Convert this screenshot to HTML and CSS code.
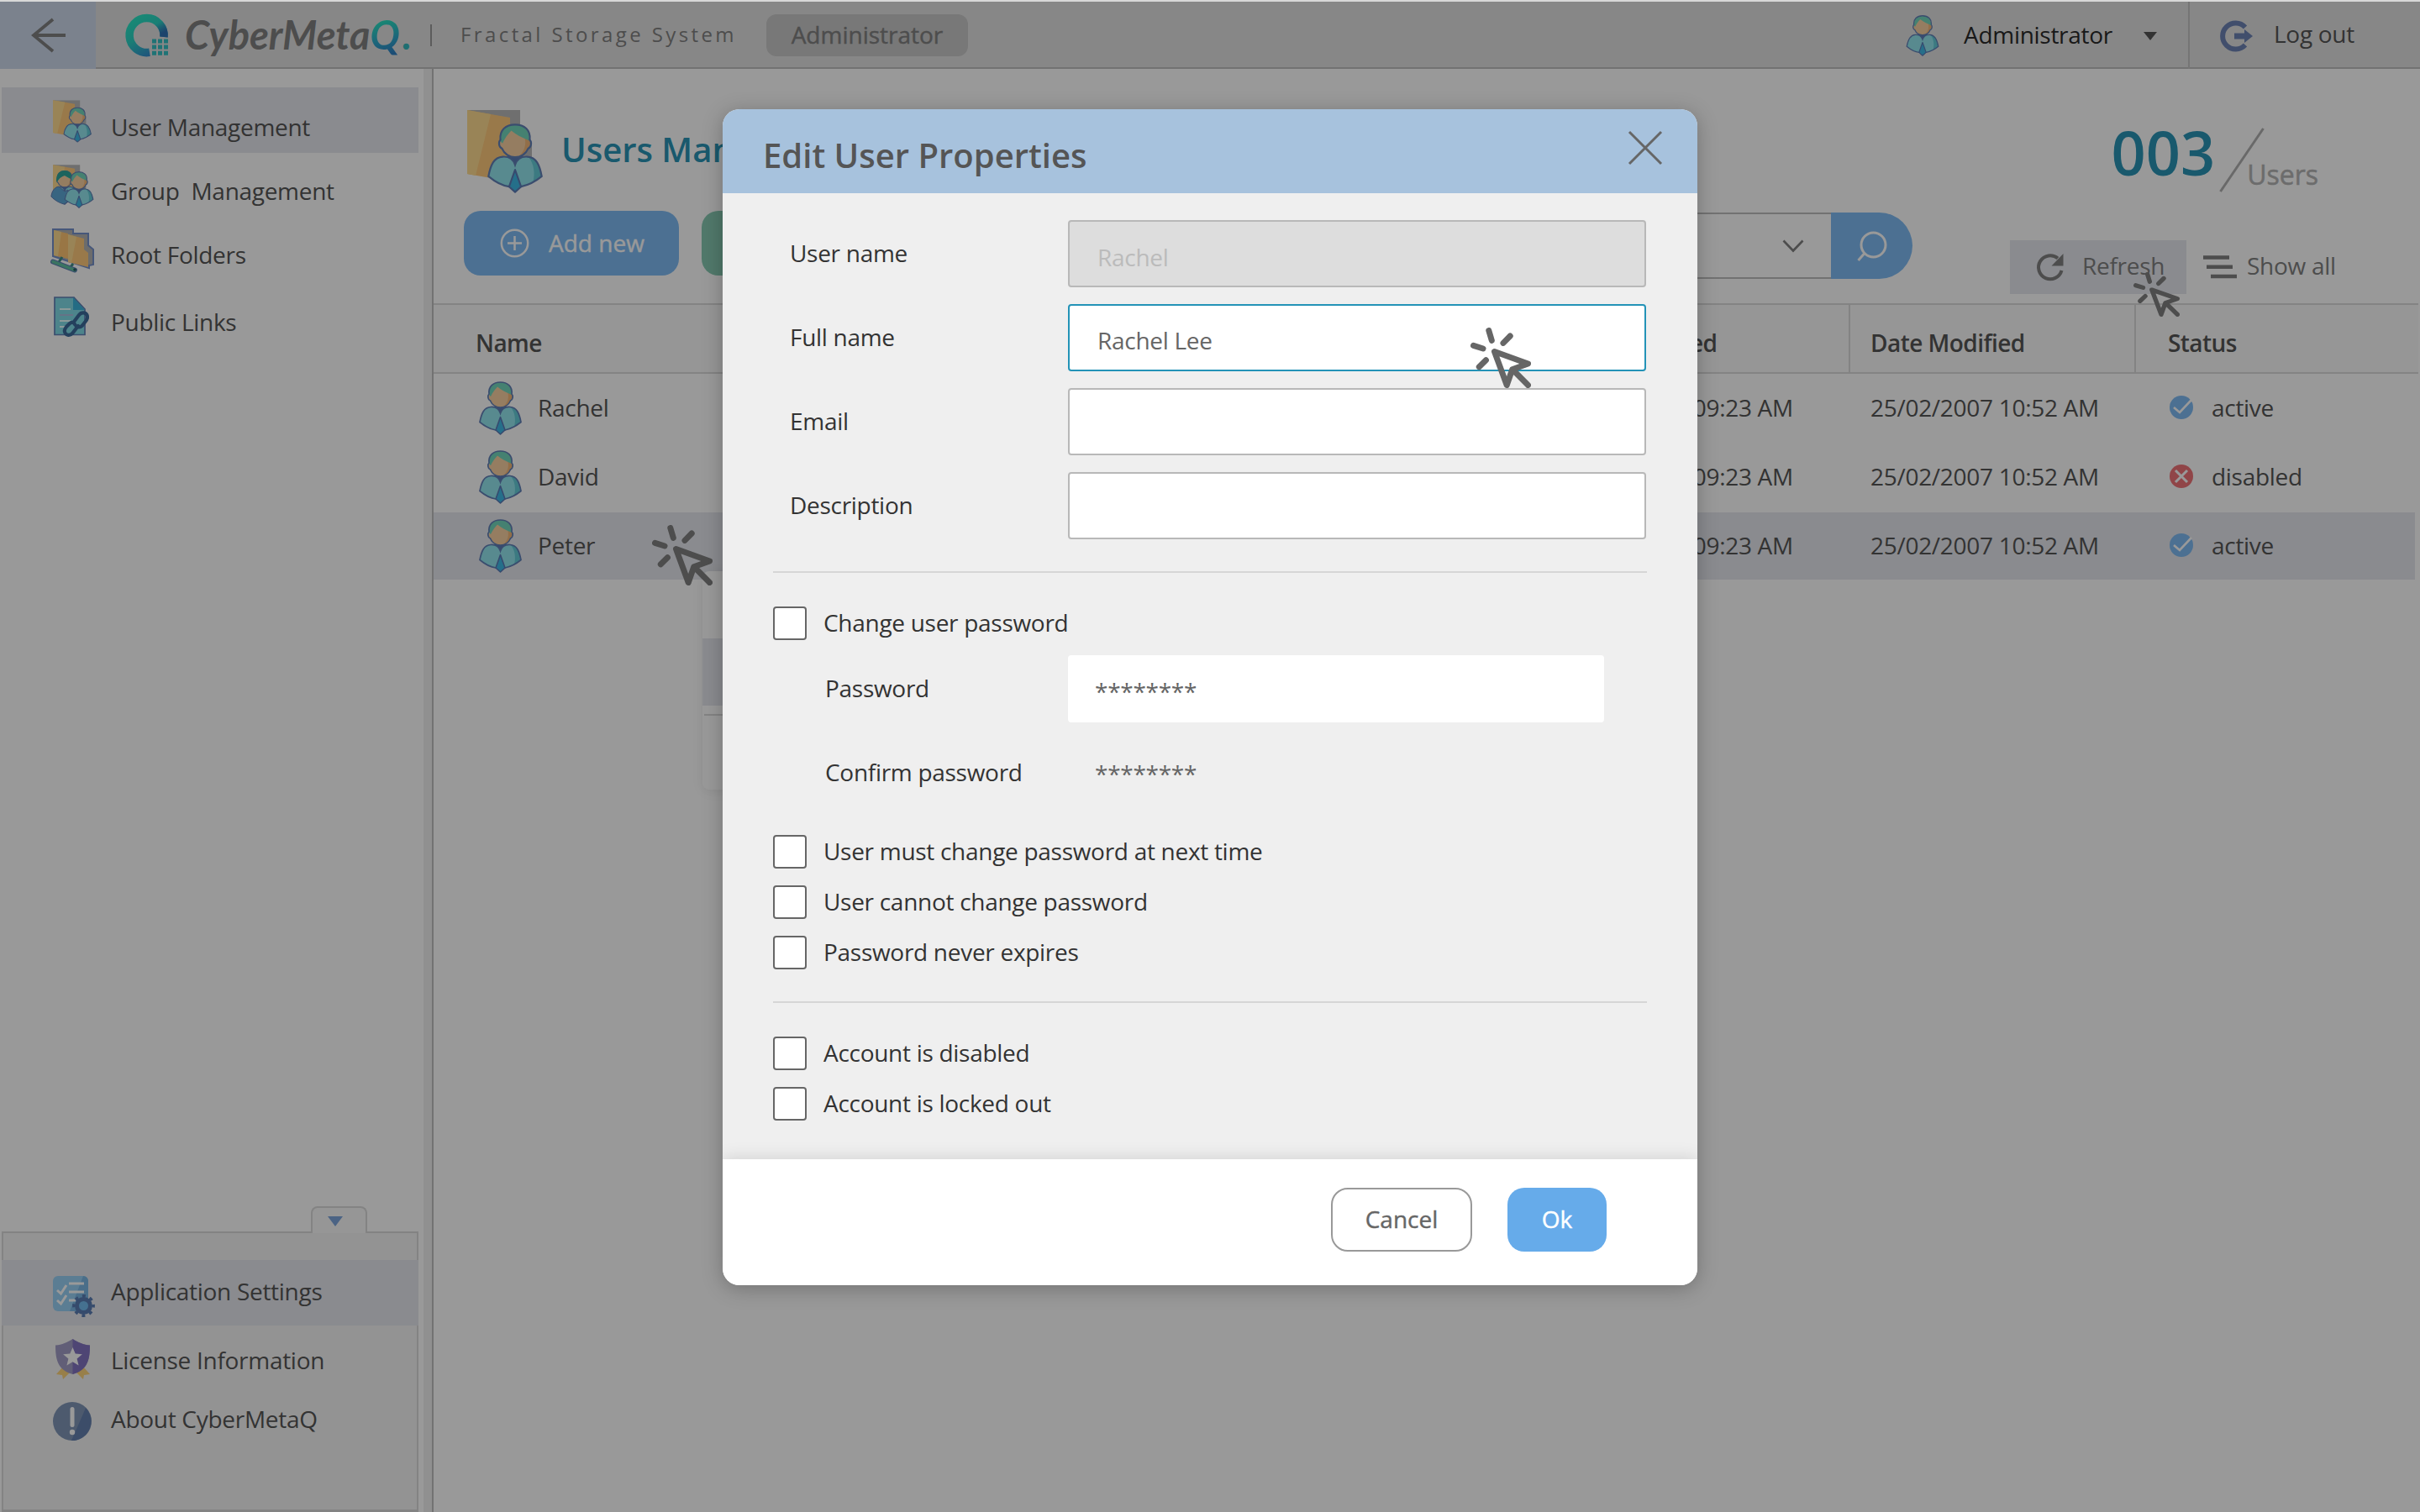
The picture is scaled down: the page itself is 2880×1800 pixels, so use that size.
FILE: index.html
```html
<!DOCTYPE html>
<html lang="en">
<head>
<meta charset="utf-8">
<title>CyberMetaQ – Users Management</title>
<link rel="stylesheet" href="styles.css">
</head>
<body>
<svg class="sprite" aria-hidden="true">
  <defs>
    <linearGradient id="ring" x1="0.2" y1="0" x2="0.8" y2="1">
      <stop offset="0" stop-color="#2ae3c4"/><stop offset="0.45" stop-color="#2dd0c4"/><stop offset="1" stop-color="#3588d0"/>
    </linearGradient>
    <linearGradient id="ringtip" x1="0" y1="0" x2="0.4" y2="1">
      <stop offset="0.4" stop-color="#3070b4" stop-opacity="0"/><stop offset="1" stop-color="#3070b4"/>
    </linearGradient>
    <symbol id="user" viewBox="0 0 51 64">
      <path d="M18 30h15l-7.500 9z" fill="#5c7cb8"/>
      <path d="M1 48.500C3 38 6 31 14 30.500c6-.5 10 3 11.500 7.500 1.500-4.500 5.500-8 11.500-7.500 8 .5 11 7.500 13 18-6 5-12 8-19 9.500H20C13 57 7 53.500 1 48.500z" fill="#93e6ee"/>
      <path d="M38 31c9 1 10 9 12 17.500l-8 5.500c2-8 1-17-4-23z" fill="#64ccd8"/>
      <path d="M1 48.500C3 38 6 31 14 30.500c6-.5 10 3 11.500 7.500 1.500-4.500 5.500-8 11.500-7.500 8 .5 11 7.500 13 18-6 5-12 8-19 9.500H20C13 57 7 53.500 1 48.500z" fill="none" stroke="#6280b8" stroke-width="1.700"/>
      <path d="M25.500 42.500L31 58l-5.500 5L20 58z" fill="#3eb9e6" stroke="#5c7cb8" stroke-width="1.600" stroke-linejoin="round"/>
      <path d="M12 15C11 6 17 1 25.500 1S40 6 39 15c2 2 1.500 7-1.500 8-2 5-7 8-12 8s-10-3-12-8c-3-1-3.500-6-1.500-8z" fill="#f8d0a2"/>
      <path d="M34 12l5 3c2 2 1.500 7-1.500 8-2 4-5 7-8.500 7.500 6-6 7-12 5-18.500z" fill="#f4b878"/>
      <path d="M14 18c-2-1-2-3-2-5C12 5 18 1 25.500 1S39 5 39 16c-7-3-13-6-17-9.500-3 3-6 7-8 11.500z" fill="#74d8bc"/>
      <path d="M12 15C11 6 17 1 25.500 1S40 6 39 15c2 2 1.500 7-1.500 8-2 5-7 8-12 8s-10-3-12-8c-3-1-3.500-6-1.500-8z" fill="none" stroke="#6280b8" stroke-width="1.700"/>
    </symbol>
    <symbol id="folder" viewBox="0 0 90 99">
      <path d="M1 0h62v41h14v36H25z" fill="#b9b9b9"/>
      <path d="M0 0l51 9v76L0 76z" fill="#ffca7c"/>
      <path d="M0 0l28 5-18 73-10-2z" fill="#ffdd92"/>
    </symbol>
    <symbol id="click" viewBox="0 0 72 72">
      <g fill="none" stroke="currentColor" stroke-width="7" stroke-linecap="round" stroke-linejoin="round">
        <path d="M21.800 3.500l3.500 11.800M3.500 21.300l11.500 3.700M10.300 46.700l8.100-8M47.200 10l-8.200 8.400"/>
        <path d="M28.500 28.500L68.500 43l-18.800 6.800L43.200 68.500z M51.700 51.500l16.800 17"/>
      </g>
    </symbol>
    <symbol id="ok" viewBox="0 0 28 28">
      <circle cx="14" cy="14" r="14" fill="#7fbbf3"/><path d="M5 14l7 6L26 5" fill="none" stroke="#fff" stroke-width="2.600"/>
    </symbol>
    <symbol id="no" viewBox="0 0 28 28">
      <circle cx="14" cy="14" r="14" fill="#f07478"/><path d="M7 7l14 14M21 7L7 21" fill="none" stroke="#fff" stroke-width="3"/>
    </symbol>
  </defs>
</svg>

<div class="app">
  <header class="topbar">
    <button class="back"><svg width="42" height="42" viewBox="0 0 42 42"><path d="M41 21H3M26 2L3 21l23 19" fill="none" stroke="#808080" stroke-width="3.800"/></svg></button>
    <div class="brand">
      <svg width="50" height="50" viewBox="0 0 50 50">
        <path d="M45 27A20.500 20.500 0 1 0 28 45.300" fill="none" stroke="url(#ring)" stroke-width="9.500"/>
        <path d="M29 5A20.500 20.500 0 0 1 45 27" fill="none" stroke="url(#ringtip)" stroke-width="9.500"/>
        <path d="M31 29.500h5v5h-5zM38 29.500h5v5h-5zM45 29.500h5v5h-5zM31 36.500h5v5h-5zM38 36.500h5v5h-5zM45 36.500h5v5h-5zM31 43.700h5v5h-5zM38 43.700h5v5h-5zM45 43.700h5v5h-5z" fill="#35c0c4"/>
      </svg>
      <span class="wordmark">CyberMeta<span class="q">Q</span><span class="dot">.</span></span>
    </div>
    <span class="rule"></span>
    <span class="product">Fractal Storage System</span>
    <span class="role">Administrator</span>
    <div class="account">
      <svg width="40" height="49"><use href="#user"/></svg>
      <span class="who">Administrator</span>
      <span class="caret"></span>
    </div>
    <div class="logout">
      <svg width="42" height="38" viewBox="0 0 42 38"><path d="M33 8.500A15.500 15.500 0 1 0 33 29.500" fill="none" stroke="#6d83b5" stroke-width="6"/><path d="M20 15.500h12V11l10 8-10 8v-4.500H20z" fill="#6d83b5"/></svg>
      <span>Log out</span>
    </div>
  </header>

  <div class="body">
    <aside class="sidebar">
      <nav class="menu">
        <a class="item active">
          <svg width="46" height="51" viewBox="0 0 90 99"><use href="#folder" width="90" height="99"/><use href="#user" x="24" y="16" width="66" height="83"/></svg>
          <span>User Management</span></a>
        <a class="item">
          <svg width="52" height="52" viewBox="0 0 52 52"><use href="#folder" x="3" width="46" height="51"/>
            <g><use href="#user" x="0" y="7" width="34" height="41"/><path d="M1 37c1-6 4-10 9-11l7 6 4-2v14l-5 3C9 45 5 42 1 38z" fill="#5ea9d8" stroke="#6280b8"/><path d="M7 19c0-8 4-12 10-12s9 4 9 11l-9-5c-3 1-7 3-9 8z" fill="#2fa79c"/></g>
            <use href="#user" x="16" y="8" width="36" height="44"/></svg>
          <span>Group&nbsp; Management</span></a>
        <a class="item">
          <svg width="52" height="52" viewBox="0 0 52 52"><path d="M3 1h24v5h18v14l6 5v18l-5 1v3L3 33z" fill="#b4b4b4" stroke="#7692cc" stroke-width="2"/>
            <path d="M4 2l17 4v30L4 32z" fill="#ffc573"/><path d="M4 2l9 2-4 29-5-1z" fill="#ffdd92"/>
            <path d="M21 7l19 5v13l5 4v17l-24-6z" fill="#ffca7c"/><path d="M21 7l10 3-6 31-4-1z" fill="#ffdd92"/>
            <path d="M14 34l-4 6M27 42l-4 5" stroke="#3f8f88" stroke-width="3"/><path d="M3 39.500l26 10" stroke="#6280b8" stroke-width="6" stroke-linecap="round"/><path d="M3 39.500l26 10" stroke="#62c2a2" stroke-width="3.600" stroke-linecap="round"/><circle cx="29" cy="49" r="1.800" fill="#285c68"/></svg>
          <span>Root Folders</span></a>
        <a class="item">
          <svg width="44" height="50" viewBox="0 0 44 50"><path d="M1 1h23l13 14v30.500H1z" fill="#80dce8" stroke="#6280b8" stroke-width="1.700"/><path d="M23 1v15h14z" fill="#3cb4dc"/>
            <path d="M7 15h13M7 29h13M7 36h8" stroke="#e8ffff" stroke-width="2"/><path d="M7 22h16" stroke="#a8c0e0" stroke-width="2"/>
            <g fill="none" stroke="#3c6c9c" stroke-width="4.200" stroke-linecap="round"><path d="M24 30l6-8c3-4 8-3 9.500 0s.5 5-2 8l-4 5c-2 2-5 2-7 0"/><path d="M29 35l-7 9c-3 3-7 2-8.500-.5s-.5-5 1.500-7.500l4-4c2-2 5-1 6 1"/></g></svg>
          <span>Public Links</span></a>
      </nav>
      <div class="drawer">
        <span class="tab"><i></i></span>
        <a class="item active">
          <svg width="50" height="50" viewBox="0 0 50 50"><rect width="42" height="42" rx="6" fill="#98d0f6"/><path d="M36 0a6 6 0 0 1 6 6v30a6 6 0 0 1-6 6H20z" fill="#7cb8e4"/>
            <path d="M5 17l4.500 4L16 11M5 29l4.500 4L16 23M19 9h18M19 19h18M19 29h8" fill="none" stroke="#fff" stroke-width="3"/>
            <circle cx="36.500" cy="35.500" r="8" fill="#74bdf0" stroke="#5a7db5" stroke-width="5"/><circle cx="36.500" cy="35.500" r="11.700" fill="none" stroke="#5a7db5" stroke-width="3.400" stroke-dasharray="4 5.190" stroke-dashoffset="2"/></svg>
          <span>Application Settings</span></a>
        <a class="item">
          <svg width="42" height="50" viewBox="0 0 42 50"><path d="M9 33L1 42l7 1 1 5 8-8zM33 33l8 9-7 1-1 5-8-8z" fill="#fed47a"/>
            <path d="M20.500 0c6 4 13 7 20.500 7.500C41 27 37 37 20.500 42 4 37 0 27 0 7.500 8 7 14 4 20.500 0z" fill="#a29dc6"/><path d="M20.500 0c6 4 13 7 20.500 7.500C41 27 37 37 20.500 42z" fill="#8374c2"/>
            <path d="M20.500 10l3.200 7.600 8.200.6-6.300 5.300 2 8-7.100-4.300-7.100 4.300 2-8-6.300-5.300 8.200-.6z" fill="#fff"/></svg>
          <span>License Information</span></a>
        <a class="item">
          <svg width="46" height="46" viewBox="0 0 46 46"><circle cx="23" cy="23" r="23" fill="#8096b8"/><path d="M39 7a23 23 0 0 1-17 39c6-14 12-27 17-39z" fill="#6480b0"/><path d="M23 8.500v19" stroke="#fff" stroke-width="5" stroke-linecap="round"/><circle cx="23" cy="36" r="3.200" fill="#fff"/></svg>
          <span>About CyberMetaQ</span></a>
      </div>
    </aside>
    <div class="gutter"></div>

    <main class="main">
      <section class="heading">
        <svg class="heading-icon" width="90" height="99" viewBox="0 0 90 99"><use href="#folder"/><use href="#user" x="24" y="16" width="66" height="83"/></svg>
        <h1>Users Management</h1>
        <div class="count">
          <strong>003</strong>
          <svg width="54" height="77" viewBox="0 0 54 77"><path d="M1.500 76L52.500 1" stroke="#b0b0b0" stroke-width="3"/></svg>
          <span>Users</span>
        </div>
      </section>
      <section class="toolbar">
        <button class="btn add"><svg width="35" height="35" viewBox="0 0 35 35"><path d="M17.500 9v17M9 17.500h17" stroke="#fff" stroke-width="2.500"/><circle cx="17.500" cy="17.500" r="15.700" fill="none" stroke="#fff" stroke-width="2.500"/></svg><span>Add new</span></button>
        <button class="btn green"></button>
        <div class="search">
          <div class="query"><svg width="26" height="16" viewBox="0 0 26 16"><path d="M1.500 1.500L13 13.500 24.500 1.500" fill="none" stroke="#808080" stroke-width="2.600"/></svg></div>
          <button class="go"><svg width="36" height="38" viewBox="0 0 36 38"><circle cx="19.500" cy="17.500" r="14.500" fill="none" stroke="#fff" stroke-width="3"/><path d="M8.500 28L1.500 36" stroke="#fff" stroke-width="3"/></svg></button>
        </div>
        <div class="tool refresh">
          <svg width="34" height="34" viewBox="0 0 34 34"><path d="M30.500 21A14 14 0 1 1 26 6.500" fill="none" stroke="#808080" stroke-width="4"/><path d="M32.500 1v14.500H18.500z" fill="#808080"/></svg>
          <span>Refresh</span>
          <svg class="pointer" width="55" height="53" viewBox="0 0 72 72" preserveAspectRatio="none"><use href="#click" width="72" height="72"/></svg>
        </div>
        <div class="tool">
          <svg width="40" height="28" viewBox="0 0 40 28"><path d="M0 2.500h31M4 13.800h31M9 25h31" stroke="#808080" stroke-width="4.500"/></svg>
          <span>Show all</span>
        </div>
      </section>
      <section class="table">
        <div class="row head"><span>Name</span><span>Date Created</span><span>Date Modified</span><span>Status</span></div>
        <div class="row"><span><svg width="51" height="64"><use href="#user"/></svg>Rachel</span><span>25/02/2007 09:23 AM</span><span>25/02/2007 10:52 AM</span><span><svg width="28" height="28"><use href="#ok"/></svg>active</span></div>
        <div class="row"><span><svg width="51" height="64"><use href="#user"/></svg>David</span><span>25/02/2007 09:23 AM</span><span>25/02/2007 10:52 AM</span><span><svg width="28" height="28"><use href="#no"/></svg>disabled</span></div>
        <div class="row selected"><span><svg width="51" height="64"><use href="#user"/></svg>Peter</span><span>25/02/2007 09:23 AM</span><span>25/02/2007 10:52 AM</span><span><svg width="28" height="28"><use href="#ok"/></svg>active</span>
          <div class="context"><i class="hot"></i><i class="line"></i></div>
          <svg class="pointer" width="72" height="72"><use href="#click"/></svg>
        </div>
      </section>
    </main>
  </div>

  <div class="overlay">
    <form class="modal">
      <header class="modal-head">
        <h2>Edit User Properties</h2>
        <svg width="42" height="42" viewBox="0 0 42 42"><path d="M2 2l38 38M40 2L2 40" stroke="#666" stroke-width="3"/></svg>
      </header>
      <div class="modal-body">
        <div class="field"><label>User name</label><div class="input disabled">Rachel</div></div>
        <div class="field"><label>Full name</label><div class="input focus">Rachel Lee<svg class="pointer" width="72" height="72"><use href="#click"/></svg></div></div>
        <div class="field"><label>Email</label><div class="input"></div></div>
        <div class="field"><label>Description</label><div class="input"></div></div>
        <hr>
        <div class="check first"><i></i><span>Change user password</span></div>
        <div class="secret"><label>Password</label><div class="pw filled">********</div></div>
        <div class="secret"><label>Confirm password</label><div class="pw">********</div></div>
        <div class="check policy"><i></i><span>User must change password at next time</span></div>
        <div class="check"><i></i><span>User cannot change password</span></div>
        <div class="check"><i></i><span>Password never expires</span></div>
        <hr class="second">
        <div class="check first"><i></i><span>Account is disabled</span></div>
        <div class="check"><i></i><span>Account is locked out</span></div>
      </div>
      <footer class="modal-foot">
        <button type="button" class="cancel">Cancel</button>
        <button type="button" class="okay">Ok</button>
      </footer>
    </form>
  </div>
</div>
</body>
</html>
```
FILE: styles.css
```css
* { box-sizing: border-box; }
body { margin: 0; background: #d8d8d8; font: 28px/40px "Open Sans", sans-serif; letter-spacing: -0.29px; color: #555; }
button { border: 0; padding: 0; font: inherit; letter-spacing: inherit; }
svg { display: block; flex: none; overflow: visible; }
.sprite { position: absolute; width: 0; height: 0; }
.app { position: relative; width: 2880px; height: 1800px; padding-top: 2px; display: flex; flex-direction: column; overflow: hidden; }

/* top bar */
.topbar { height: 80px; flex: none; display: flex; align-items: center; background: #e2e2e2; box-shadow: inset 0 -2px #bfbfbf; white-space: nowrap; }
.back { width: 114px; height: 80px; padding-left: 37px; background: #cdd9eb; }
.brand { margin-left: 36px; display: flex; align-items: center; gap: 20px; width: 362px; }
.wordmark { margin-top: -2px; font: italic 700 47px/60px Lato, sans-serif; letter-spacing: 0; color: #808080; }
.q { display: inline-block; padding-right: 3px; background: linear-gradient(165deg, #2ae0c0 25%, #30a8cc 60%, #3080c4 85%); -webkit-background-clip: text; background-clip: text; color: transparent; }
.dot { color: #35b8bc; }
.rule { width: 2px; height: 26px; background: #999; }
.product { margin: -2px 0 0 34px; width: 364px; font-size: 24px; letter-spacing: 3.4px; color: #808080; }
.role { width: 240px; height: 50px; line-height: 48px; border-radius: 12px; text-align: center; background: #c8c8c8; color: #808080; font-weight: 500; letter-spacing: 0; -webkit-text-stroke: 0.4px; }
.account { margin-left: auto; width: 338px; height: 80px; display: flex; align-items: center; border-right: 2px solid #c4c4c4; }
.who { margin: -2px 0 0 29px; width: 214px; color: #2b2b2b; }
.caret { margin-top: 2px; border: 8px solid transparent; border-top: 10px solid #555; border-bottom: 0; }
.logout { width: 274px; padding-left: 33px; display: flex; align-items: center; gap: 25px; }
.logout svg { margin-top: 1px; }
.logout span { margin-top: -5px; }

/* sidebar */
.body { flex: 1; display: flex; background: #fff; }
.sidebar { width: 504px; padding: 22px 6px 0 2px; display: flex; flex-direction: column; }
.item { display: flex; align-items: center; height: 76px; padding: 15px 0 0 61px; }
.item svg { margin-top: -12px; }
.item.active { background: #e6e8ee; }
.menu .item:nth-child(1) { height: 78px; }
.menu .item:nth-child(1) svg { margin: -13px 23px 0 0; }
.menu .item:nth-child(n+2) { padding-left: 58px; }
.menu .item:nth-child(n+2) svg { width: 52px; margin-right: 20px; }
.menu .item:nth-child(n+2) span { margin-top: -2px; }
.menu .item:nth-child(4) { padding-top: 19px; margin-top: 2px; }
.drawer { position: relative; margin-top: auto; height: 334px; border: 2px solid #dadada; border-bottom-width: 3px; background: #f5f5f5; padding-top: 32px; }
.drawer .item { height: 78px; padding: 0 0 0 61px; margin: 0 -2px; }
.drawer .item svg { margin: 9px 19px 0 0; }
.drawer .item span { margin-top: -4px; }
.drawer .item:nth-of-type(2) { margin-top: 2px; padding-left: 64px; }
.drawer .item:nth-of-type(2) svg { margin: 0 24px 0 0; }
.drawer .item:nth-of-type(2) span { margin-top: 0; }
.drawer .item:nth-of-type(3) { margin-top: -6px; }
.drawer .item:nth-of-type(3) svg { margin: 2px 23px 0 0; }
.drawer .item:nth-of-type(3) span { margin-top: -4px; }
.tab { position: absolute; left: 366px; top: -32px; width: 67px; height: 32px; border: 2px solid #dadada; border-bottom: 0; border-radius: 8px 8px 0 0; background: #fbfbfb; padding: 10px 0 0 18px; }
.tab i { display: block; width: 0; border: 9px solid transparent; border-top: 12px solid #7da5dc; border-bottom: 0; }
.gutter { width: 12px; background: #f1f1f1; border-right: 2px solid #bfbfbf; }

/* main area */
.main { flex: 1; display: flex; flex-direction: column; }
.heading { display: flex; height: 169px; padding: 49px 121px 0 40px; }
h1 { margin: 20px 0 0 22px; font-size: 40px; line-height: 54px; font-weight: 600; letter-spacing: 0; color: #2a94b6; }
.count { margin-left: auto; display: flex; height: 100px; }
.count strong { font-size: 72px; line-height: 100px; font-weight: 600; letter-spacing: 0; color: #2a94b6; }
.count svg { margin: 21px 0 0 5px; }
.count span { margin: 57px 0 0 -21px; font-size: 32px; line-height: 40px; font-weight: 500; letter-spacing: 0; -webkit-text-stroke: 0.5px; color: #b4b4b4; }
.toolbar { display: flex; height: 110px; padding-left: 36px; align-items: flex-start; }
.btn { height: 77px; border-radius: 20px; display: flex; align-items: center; color: #fff; }
.add { width: 256px; padding-left: 43px; gap: 23px; background: #7fbbf3; font-weight: 500; letter-spacing: 0; -webkit-text-stroke: 0.4px; }
.add span { margin-top: -2px; }
.green { margin-left: 27px; width: 256px; background: #87cab2; }
.search { margin: 2px 0 0 409px; width: 776px; height: 79px; display: flex; }
.query { flex: 1; border: 2px solid #bfbfbf; border-right: 0; display: flex; align-items: center; justify-content: flex-end; padding-right: 32px; }
.go { width: 97px; border-radius: 0 40px 40px 0; background: #7fbbf3; padding-left: 31px; }
.tool { margin: 35px 0 0 0; height: 64px; display: flex; align-items: center; color: #808080; padding-left: 20px; gap: 12px; }
.refresh { position: relative; z-index: 1; margin-left: 116px; width: 210px; background: #e6e8ee; padding-left: 31px; gap: 21px; }
.tool span { margin-top: -5px; }
.pointer { position: absolute; color: #808080; }
.refresh .pointer { left: 147px; top: 38px; }

/* table */
.row { position: relative; display: grid; grid-template-columns: 1320px 364px 340px 334px; height: 82px; }
.row > span { display: flex; align-items: center; padding: 0 0 2px 26px; }
.row > span:first-child { padding-left: 54px; }
.row svg { margin: 2px 19px 0 0; }
.row > span:nth-child(4) svg { margin: 0 22px 0 0; }
.row > span:nth-child(4) { padding-left: 42px; }
.head { width: 2362px; height: 84px; font-weight: 600; letter-spacing: -0.55px; background: #fbfbfb; border: solid #dadada; border-width: 2px 0; }
.head > span { padding: 9px 0 0 36px; }
.head > span:nth-child(n+3) { border-left: 2px solid #dadada; }
.head > span:nth-child(3) { padding-left: 24px; }
.head > span:first-child { padding-left: 50px; }
.head > span:nth-child(4) { padding-left: 38px; }
.selected { width: 2358px; height: 80px; margin-top: 1px; background: #e6e8ee; }
.row .pointer { left: 260px; top: 15px; margin: 0; }
.context { position: absolute; left: 320px; top: 70px; width: 400px; height: 260px; border-radius: 8px; background: #fff; box-shadow: 0 2px 14px rgba(0,0,0,.08); padding-top: 80px; }
.context i { display: block; }
.hot { height: 80px; background: #e6e8ee; }
.line { margin: 10px 2px 0; height: 2px; background: #dadada; }

/* dialog */
.overlay { position: absolute; z-index: 2; inset: 2px 0 0; padding-top: 128px; background: rgba(0,0,0,.4); }
.modal { width: 1160px; height: 1400px; margin: 0 auto; border-radius: 20px; overflow: hidden; background: #efefef; display: flex; flex-direction: column; box-shadow: 0 4px 24px rgba(0,0,0,.25); color: #333; }
.modal-head { height: 100px; display: flex; justify-content: space-between; padding: 25px 41px 0 48px; background: #a7c2dd; }
h2 { margin: 3px 0 0; font-size: 40px; line-height: 54px; font-weight: 600; letter-spacing: 0; color: #555; }
.modal-body { flex: 1; padding: 32px 60px 0; }
.field { display: flex; height: 100px; }
.field label { width: 351px; padding: 19px 0 0 20px; }
.input { position: relative; width: 688px; height: 80px; border: 2px solid #b8b8b8; border-radius: 4px; background: #fff; padding: 21px 0 0 33px; color: #666; }
.input.disabled { background: #ddd; color: #bbb; padding-top: 22px; }
.input.focus { border-color: #2393b7; }
.input .pointer { left: 477px; top: 26px; color: #666; }
hr { width: 1040px; height: 2px; margin: 18px 0 40px; border: 0; background: #d6d6d6; }
hr.second { margin: 38px 0 40px; }
.check { height: 40px; margin-top: 20px; display: flex; gap: 20px; }
.check.first { margin-top: 0; }
.check.policy { margin-top: 34px; }
.check i { width: 40px; height: 40px; border: 2px solid #666; border-radius: 4px; background: #fff; }
.check span { margin-top: -1px; }
.secret { display: flex; height: 80px; margin-top: 20px; }
.check + .secret { margin-top: 18px; }
.secret label { width: 351px; padding: 19px 0 0 62px; }
.pw { width: 638px; border-radius: 4px; padding: 21px 0 0 32px; color: #666; }
.filled { background: #fff; padding-top: 23px; }
.modal-foot { height: 150px; flex: none; display: flex; justify-content: flex-end; gap: 42px; padding: 34px 108px 0 0; background: #fff; box-shadow: 0 0 20px rgba(0,0,0,.14); }
.modal-foot button { height: 76px; padding-bottom: 2px; border-radius: 20px; font-weight: 500; letter-spacing: 0; -webkit-text-stroke: 0.4px; }
.cancel { width: 168px; border: 2px solid #999; background: #fff; color: #666; }
.okay { width: 118px; background: #66abea; color: #fff; }
```
